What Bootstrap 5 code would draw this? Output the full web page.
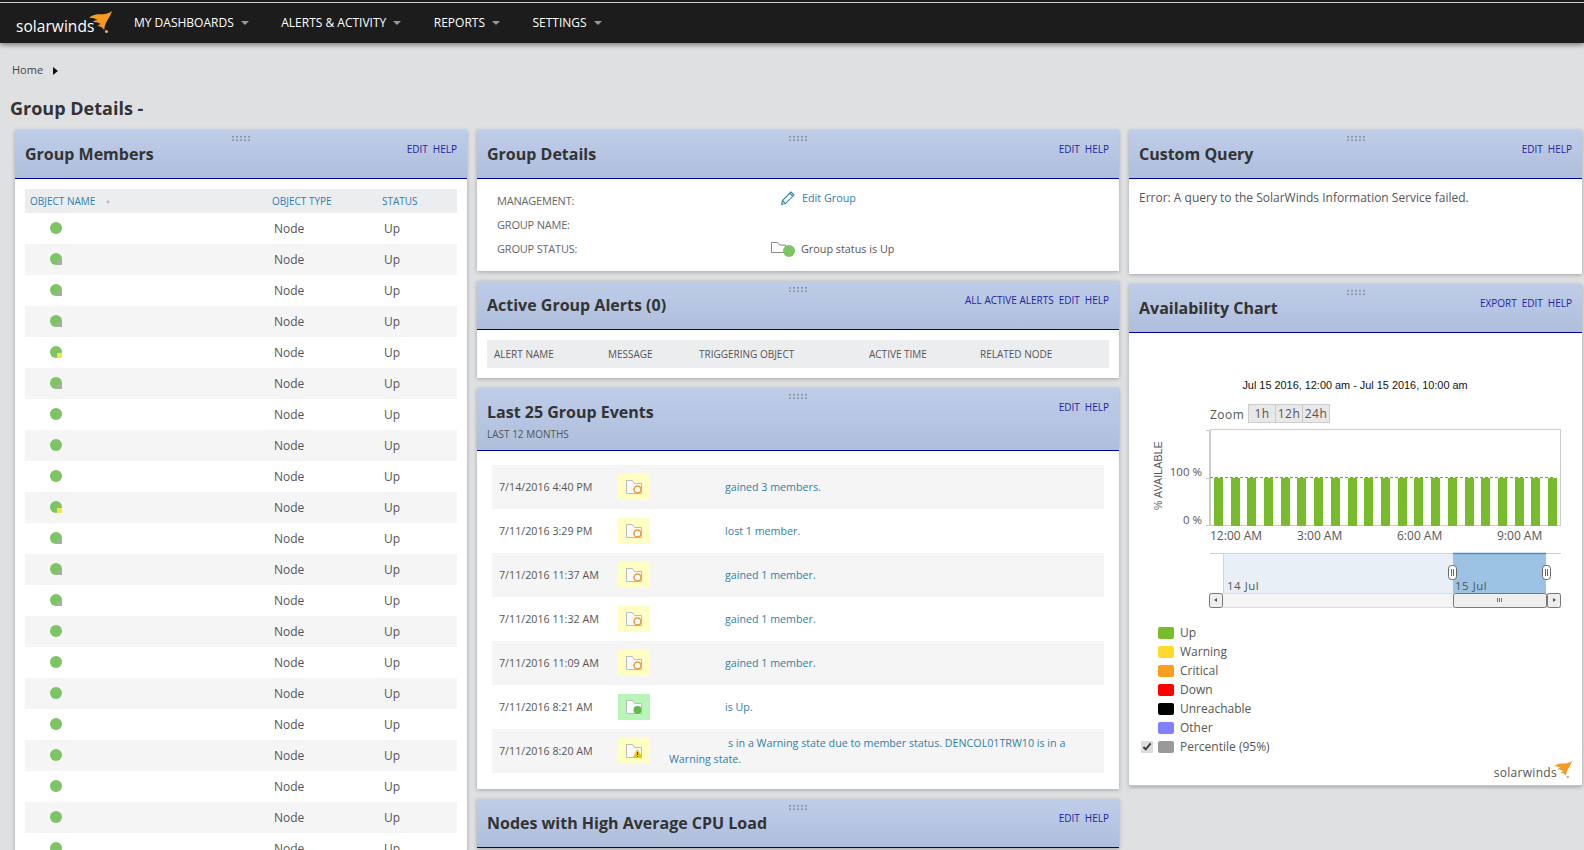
<!DOCTYPE html>
<html lang="en">
<head>
<meta charset="utf-8">
<title>Group Details</title>
<link href="https://cdn.jsdelivr.net/npm/bootstrap@5.3.0/dist/css/bootstrap.min.css" rel="stylesheet">
<style>
html,body{height:850px;overflow:hidden}
body{background:#dfe0e2;font-family:"Open Sans",sans-serif;font-size:12px;color:#555}
a{text-decoration:none}
.topbar{height:43px;background:#1c1c1c;border-top:2px solid #1c1c1c;box-shadow:0 2px 5px rgba(0,0,0,.45);position:relative}
.topbar::before{content:"";position:absolute;left:0;right:0;top:0;height:1px;background:#cfd0d0}
.brand{width:134px;height:41px;padding-left:16px}
.brand-word{font-size:15.5px;color:#fff;letter-spacing:.05px;line-height:1;margin-top:17px}
.flame-top{width:24px;height:23px;margin:9px 0 0 -5px}
.menu-item{color:#fff;font-size:12px;letter-spacing:0;margin-right:32.5px;line-height:1;margin-top:15px;height:14px}
.menu-item::after{content:"";display:inline-block;border:4px solid transparent;border-top:4px solid #999;border-bottom:0;margin-left:7px;vertical-align:2px}
.crumbs{height:53px;padding:19px 0 0 12px;font-size:11px;color:#444;line-height:15px}
.crumbs i{display:inline-block;border:4px solid transparent;border-left:5px solid #111;border-right:0;margin-left:7px;vertical-align:-1px}
.page-head{font-size:18px;font-weight:700;color:#333;padding-left:10px;line-height:24px;margin:0 0 10px}
.board{padding-left:15px;gap:10px}
.col-l{width:452px}.col-m{width:642px}.col-r{width:453px}
.stack{gap:10px}
.panel{background:#fff;box-shadow:0 1px 4px rgba(0,0,0,.28)}
.panel-top{position:relative;height:49px;padding:13px 10px 0;background:linear-gradient(#bfcde9,#aebedb);border-bottom:1px solid #00009a}
.panel-top.tall{height:63px}
.panel-title{font-size:16px;font-weight:700;color:#333;line-height:23px;margin:0}
.panel-sub{font-size:10px;color:#555;line-height:12px;margin-top:4px}
.panel-links{position:absolute;right:10px;top:13px;font-size:10px;line-height:13px;display:flex;gap:5px}
.panel-links a{color:#24249c}
.grip{position:absolute;top:5px;left:50%;margin-left:-10px;width:19px;height:7px;background-image:radial-gradient(circle,#8f96a6 1px,transparent 1.1px);background-size:4px 3.5px}
.grid-head{background:#ecedef;font-size:10px}
.members{padding:10px 10px 0}
.members .grid-head{height:24px;color:#2d7fb0;line-height:25px}
.m-row{height:31px;line-height:32px;font-size:12px}
.m-row:nth-child(even){background:#f5f5f5}
.c-name{width:247px;padding-left:5px}
.c-type{width:110px}
.m-row .c-type{padding-left:2px}
.m-row .c-stat{padding-left:2px}
.dot{display:block;position:relative;width:12px;height:12px;border-radius:50%;background:#7cc464;margin:9px 0 0 20px}
.dot.grey::after,.dot.yel::after{content:"";position:absolute;right:0;bottom:0;width:5px;height:5px;background:#aaa}
.dot.yel::after{background:#f5e642}
.sort-mark{font-size:6px;color:#bbb;margin-left:7px;vertical-align:2px}
.detail-body{height:92px;padding-top:10px;position:relative}
.d-row{height:24px;line-height:24px}
.d-label{width:281px;padding-left:20px;font-size:11px;color:#666;letter-spacing:-.2px}
.d-val{font-size:10.8px}
.edit-cell{margin-top:-3px;height:24px}
.edit-glyph{margin:0 6px 0 22px}
.status-glyph{margin:0 6px 0 13px}
.lnk{color:#2f7fa8}
.alert-body{padding:10px 10px 10px}
.alert-body .grid-head{height:28px;line-height:28px;color:#555}
.a1{width:121px;padding-left:7px}.a2{width:91px}.a3{width:170px}.a4{width:111px}
.events{padding:14px 15px 16px}
.e-row{height:44px;font-size:10.7px}
.e-row:nth-child(odd){background:#f5f5f5}
.e-date{width:126px;padding-left:7px;color:#555}
.e-icon{width:32px;height:26px;background:#ffffc4}
.e-icon.ok{background:#b9f5b9}
.e-msg{padding-left:75px}
.e-long{width:432px;padding-left:19px;line-height:16px}
.e-long span{padding-left:59px}
.query-body{height:95px;padding:11px 10px;font-size:12px;color:#555;line-height:16px}
.chart-area{display:block;width:453px;height:289px;margin-top:1px}
.chart-area text{font-family:"Open Sans",sans-serif}
.legend{padding:0 0 0 12px;height:163px;position:relative;border-bottom:1px solid #b8c6e4}
.leg-row{height:19px;line-height:19px;font-size:12px;color:#555}
.leg-check{width:12px;height:12px;margin-right:5px;accent-color:#ddd}
.swatch{display:block;width:16px;height:12px;border-radius:2px;margin:0 6px 0 17px}
.leg-row.has-check .swatch{margin-left:0}
.foot-logo{position:absolute;right:9px;top:138px}
.foot-word{font-size:12px;color:#555;letter-spacing:.3px;line-height:1;margin-top:6px}
.flame-small{width:19px;height:18px;margin-left:-3px}
</style>
</head>
<body>
<svg width="0" height="0" class="position-absolute">
  <symbol id="flame" viewBox="0 0 24 23">
    <path fill="#f79a22" d="M23 0C19 3 14 3.500 8.500 3.300 5 3.500 2 5 0 6.700 3 6.500 6 7.300 8.500 9 6.500 9 5 9.800 3.700 11 7 10.800 10 11.500 11.800 13 10.500 13.300 9.500 14 8.500 15 11 15 13.500 16.500 15.200 19 15.500 15 16.500 12 18.600 9 20 6.500 22 3.500 23 0Z"/>
    <circle cx="17.500" cy="20.500" r="1.600" fill="#f4a460"/>
  </symbol>
  <symbol id="folder" viewBox="0 0 16 14">
    <path d="M.5 13.500V.5h6l2 3h7v10z" fill="#fafafa" stroke="#bbb"/>
  </symbol>
</svg>

<nav class="topbar d-flex">
  <div class="brand d-flex">
    <span class="brand-word">solarwinds</span>
    <svg class="flame-top"><use href="#flame"/></svg>
  </div>
  <a class="menu-item" href="#">MY DASHBOARDS</a>
  <a class="menu-item" href="#">ALERTS &amp; ACTIVITY</a>
  <a class="menu-item" href="#">REPORTS</a>
  <a class="menu-item" href="#">SETTINGS</a>
</nav>

<div class="crumbs">Home <i></i></div>
<h1 class="page-head">Group Details -</h1>

<main class="board d-flex align-items-start">
  <div class="col-l">
    <section class="panel">
      <header class="panel-top"><span class="grip"></span><h2 class="panel-title">Group Members</h2><div class="panel-links"><a href="#">EDIT</a><a href="#">HELP</a></div></header>
      <div class="members">
        <div class="grid-head d-flex"><div class="c-name">OBJECT NAME <span class="sort-mark">▲</span></div><div class="c-type">OBJECT TYPE</div><div class="c-stat">STATUS</div></div>
        <div>
          <div class="m-row d-flex"><div class="c-name"><span class="dot"></span></div><div class="c-type">Node</div><div class="c-stat">Up</div></div>
          <div class="m-row d-flex"><div class="c-name"><span class="dot grey"></span></div><div class="c-type">Node</div><div class="c-stat">Up</div></div>
          <div class="m-row d-flex"><div class="c-name"><span class="dot grey"></span></div><div class="c-type">Node</div><div class="c-stat">Up</div></div>
          <div class="m-row d-flex"><div class="c-name"><span class="dot grey"></span></div><div class="c-type">Node</div><div class="c-stat">Up</div></div>
          <div class="m-row d-flex"><div class="c-name"><span class="dot yel"></span></div><div class="c-type">Node</div><div class="c-stat">Up</div></div>
          <div class="m-row d-flex"><div class="c-name"><span class="dot grey"></span></div><div class="c-type">Node</div><div class="c-stat">Up</div></div>
          <div class="m-row d-flex"><div class="c-name"><span class="dot"></span></div><div class="c-type">Node</div><div class="c-stat">Up</div></div>
          <div class="m-row d-flex"><div class="c-name"><span class="dot"></span></div><div class="c-type">Node</div><div class="c-stat">Up</div></div>
          <div class="m-row d-flex"><div class="c-name"><span class="dot"></span></div><div class="c-type">Node</div><div class="c-stat">Up</div></div>
          <div class="m-row d-flex"><div class="c-name"><span class="dot yel"></span></div><div class="c-type">Node</div><div class="c-stat">Up</div></div>
          <div class="m-row d-flex"><div class="c-name"><span class="dot grey"></span></div><div class="c-type">Node</div><div class="c-stat">Up</div></div>
          <div class="m-row d-flex"><div class="c-name"><span class="dot grey"></span></div><div class="c-type">Node</div><div class="c-stat">Up</div></div>
          <div class="m-row d-flex"><div class="c-name"><span class="dot grey"></span></div><div class="c-type">Node</div><div class="c-stat">Up</div></div>
          <div class="m-row d-flex"><div class="c-name"><span class="dot"></span></div><div class="c-type">Node</div><div class="c-stat">Up</div></div>
          <div class="m-row d-flex"><div class="c-name"><span class="dot"></span></div><div class="c-type">Node</div><div class="c-stat">Up</div></div>
          <div class="m-row d-flex"><div class="c-name"><span class="dot"></span></div><div class="c-type">Node</div><div class="c-stat">Up</div></div>
          <div class="m-row d-flex"><div class="c-name"><span class="dot"></span></div><div class="c-type">Node</div><div class="c-stat">Up</div></div>
          <div class="m-row d-flex"><div class="c-name"><span class="dot"></span></div><div class="c-type">Node</div><div class="c-stat">Up</div></div>
          <div class="m-row d-flex"><div class="c-name"><span class="dot"></span></div><div class="c-type">Node</div><div class="c-stat">Up</div></div>
          <div class="m-row d-flex"><div class="c-name"><span class="dot"></span></div><div class="c-type">Node</div><div class="c-stat">Up</div></div>
          <div class="m-row d-flex"><div class="c-name"><span class="dot"></span></div><div class="c-type">Node</div><div class="c-stat">Up</div></div>
        </div>
      </div>
    </section>
  </div>

  <div class="col-m d-flex flex-column stack">
    <section class="panel">
      <header class="panel-top"><span class="grip"></span><h2 class="panel-title">Group Details</h2><div class="panel-links"><a href="#">EDIT</a><a href="#">HELP</a></div></header>
      <div class="detail-body">
        <div class="d-row d-flex"><div class="d-label">MANAGEMENT:</div><div class="d-val d-flex align-items-center edit-cell">
          <svg width="16" height="16" viewBox="0 0 15 15" fill="none" stroke="#2f7fa8" class="edit-glyph"><path d="M1.500 13.500l.8-3.600 8-8 2.800 2.800-8 8zM9 3l3 3M2.300 9.900l2.800 2.800"/></svg>
          <a class="lnk" href="#">Edit Group</a></div></div>
        <div class="d-row d-flex"><div class="d-label">GROUP NAME:</div></div>
        <div class="d-row d-flex"><div class="d-label">GROUP STATUS:</div><div class="d-val d-flex align-items-center">
          <svg width="24" height="16" viewBox="0 0 24 16" class="status-glyph"><path d="M.5 11.500V1.500h6l2 2.500h6v7.500z" fill="#fff" stroke="#888"/><circle cx="18" cy="10" r="6" fill="#7cc464"/></svg>
          <span>Group status is Up</span></div></div>
      </div>
    </section>

    <section class="panel">
      <header class="panel-top"><span class="grip"></span><h2 class="panel-title">Active Group Alerts (0)</h2><div class="panel-links"><a href="#">ALL ACTIVE ALERTS</a><a href="#">EDIT</a><a href="#">HELP</a></div></header>
      <div class="alert-body">
        <div class="grid-head d-flex"><div class="a1">ALERT NAME</div><div class="a2">MESSAGE</div><div class="a3">TRIGGERING OBJECT</div><div class="a4">ACTIVE TIME</div><div>RELATED NODE</div></div>
      </div>
    </section>

    <section class="panel">
      <header class="panel-top tall"><span class="grip"></span><h2 class="panel-title">Last 25 Group Events</h2><div class="panel-sub">LAST 12 MONTHS</div><div class="panel-links"><a href="#">EDIT</a><a href="#">HELP</a></div></header>
      <div class="events">
        <div class="e-row d-flex align-items-center"><div class="e-date">7/14/2016 4:40 PM</div><div class="e-icon d-flex align-items-center justify-content-center"><svg width="16" height="14" viewBox="0 0 16 14"><use href="#folder"/><circle cx="11.500" cy="9.500" r="3.500" fill="#fff" stroke="#f39a3c" stroke-width="1.500"/></svg></div><a class="lnk e-msg" href="#">gained 3 members.</a></div>
        <div class="e-row d-flex align-items-center"><div class="e-date">7/11/2016 3:29 PM</div><div class="e-icon d-flex align-items-center justify-content-center"><svg width="16" height="14" viewBox="0 0 16 14"><use href="#folder"/><circle cx="11.500" cy="9.500" r="3.500" fill="#fff" stroke="#f39a3c" stroke-width="1.500"/></svg></div><a class="lnk e-msg" href="#">lost 1 member.</a></div>
        <div class="e-row d-flex align-items-center"><div class="e-date">7/11/2016 11:37 AM</div><div class="e-icon d-flex align-items-center justify-content-center"><svg width="16" height="14" viewBox="0 0 16 14"><use href="#folder"/><circle cx="11.500" cy="9.500" r="3.500" fill="#fff" stroke="#f39a3c" stroke-width="1.500"/></svg></div><a class="lnk e-msg" href="#">gained 1 member.</a></div>
        <div class="e-row d-flex align-items-center"><div class="e-date">7/11/2016 11:32 AM</div><div class="e-icon d-flex align-items-center justify-content-center"><svg width="16" height="14" viewBox="0 0 16 14"><use href="#folder"/><circle cx="11.500" cy="9.500" r="3.500" fill="#fff" stroke="#f39a3c" stroke-width="1.500"/></svg></div><a class="lnk e-msg" href="#">gained 1 member.</a></div>
        <div class="e-row d-flex align-items-center"><div class="e-date">7/11/2016 11:09 AM</div><div class="e-icon d-flex align-items-center justify-content-center"><svg width="16" height="14" viewBox="0 0 16 14"><use href="#folder"/><circle cx="11.500" cy="9.500" r="3.500" fill="#fff" stroke="#f39a3c" stroke-width="1.500"/></svg></div><a class="lnk e-msg" href="#">gained 1 member.</a></div>
        <div class="e-row d-flex align-items-center"><div class="e-date">7/11/2016 8:21 AM</div><div class="e-icon ok d-flex align-items-center justify-content-center"><svg width="16" height="14" viewBox="0 0 16 14"><use href="#folder"/><circle cx="11.500" cy="10" r="4" fill="#62b84e"/></svg></div><a class="lnk e-msg" href="#">is Up.</a></div>
        <div class="e-row d-flex align-items-center"><div class="e-date">7/11/2016 8:20 AM</div><div class="e-icon d-flex align-items-center justify-content-center"><svg width="16" height="14" viewBox="0 0 16 14"><use href="#folder"/><path d="M11.500 5l5 9h-10z" fill="#f5c400"/><path d="M11.500 8v3M11.500 12v1" stroke="#333"/></svg></div><a class="lnk e-long" href="#"><span>s in a Warning state due to member status. DENCOL01TRW10 is in a</span><br>Warning state.</a></div>
      </div>
    </section>

    <section class="panel">
      <header class="panel-top"><span class="grip"></span><h2 class="panel-title">Nodes with High Average CPU Load</h2><div class="panel-links"><a href="#">EDIT</a><a href="#">HELP</a></div></header>
    </section>
  </div>

  <div class="col-r d-flex flex-column stack">
    <section class="panel">
      <header class="panel-top"><span class="grip"></span><h2 class="panel-title">Custom Query</h2><div class="panel-links"><a href="#">EDIT</a><a href="#">HELP</a></div></header>
      <div class="query-body">Error: A query to the SolarWinds Information Service failed.</div>
    </section>
    <section class="panel">
      <header class="panel-top"><span class="grip"></span><h2 class="panel-title">Availability Chart</h2><div class="panel-links"><a href="#">EXPORT</a><a href="#">EDIT</a><a href="#">HELP</a></div></header>
      <svg class="chart-area" viewBox="1129 334 453 289">
        <text x="1355" y="389" text-anchor="middle" style="font-family:'Liberation Sans',sans-serif" font-size="10.9" fill="#111">Jul 15 2016, 12:00 am - Jul 15 2016, 10:00 am</text>
        <text x="1210" y="419" font-size="12" fill="#555" letter-spacing=".5">Zoom</text>
        <g fill="#e8e8e8" stroke="#ccc"><rect x="1248.500" y="404.500" width="27" height="18"/><rect x="1275.500" y="404.500" width="27" height="18"/><rect x="1302.500" y="404.500" width="27" height="18"/></g>
        <g font-size="12" fill="#555" text-anchor="middle" letter-spacing=".5"><text x="1262" y="418">1h</text><text x="1289" y="418">12h</text><text x="1316" y="418">24h</text></g>
        <rect x="1210.500" y="429.500" width="350" height="96" fill="#fff" stroke="#ccc"/>
        <path d="M1206 430.500h4M1206 478.500h4M1206 525.500h4" stroke="#ccc"/>
        <path d="M1210 430v96" stroke="#ccc" stroke-width="2"/>
        <g fill="#78bc2c">
          <rect x="1214" y="478" width="9" height="48"/><rect x="1231" y="478" width="9" height="48"/><rect x="1247" y="478" width="9" height="48"/><rect x="1264" y="478" width="9" height="48"/><rect x="1281" y="478" width="9" height="48"/><rect x="1297" y="478" width="9" height="48"/><rect x="1314" y="478" width="9" height="48"/><rect x="1331" y="478" width="9" height="48"/><rect x="1348" y="478" width="9" height="48"/><rect x="1364" y="478" width="9" height="48"/><rect x="1381" y="478" width="9" height="48"/><rect x="1398" y="478" width="9" height="48"/><rect x="1414" y="478" width="9" height="48"/><rect x="1431" y="478" width="9" height="48"/><rect x="1448" y="478" width="9" height="48"/><rect x="1465" y="478" width="9" height="48"/><rect x="1481" y="478" width="9" height="48"/><rect x="1498" y="478" width="9" height="48"/><rect x="1515" y="478" width="9" height="48"/><rect x="1531" y="478" width="9" height="48"/><rect x="1548" y="478" width="9" height="48"/>
        </g>
        <path d="M1210 477.500h345" stroke="#8c8c8c" stroke-dasharray="3 2"/>
        <g font-size="11.500" fill="#555" text-anchor="end"><text x="1202" y="476">100 %</text><text x="1202" y="524">0 %</text></g>
        <text transform="translate(1162 510) rotate(-90)" font-size="10.500" letter-spacing=".2" fill="#555" style="font-family:'Liberation Sans',sans-serif">% AVAILABLE</text>
        <g font-size="12" fill="#555"><text x="1210" y="540">12:00 AM</text><text x="1297" y="540">3:00 AM</text><text x="1397" y="540">6:00 AM</text><text x="1497" y="540">9:00 AM</text></g>
        <path d="M1210 553.500h351" stroke="#ccc"/>
        <rect x="1223.500" y="553.500" width="230" height="40" fill="#e9eff7" stroke="#cdd5e0"/>
        <rect x="1453" y="553" width="93" height="41" fill="#9cc3e4"/>
        <path d="M1453 553.500h93" stroke="#4a8fc9" stroke-width="1.500"/>
        <g font-size="11.500" fill="#555" letter-spacing=".5"><text x="1227" y="590">14 Jul</text><text x="1455" y="590">15 Jul</text></g>
        <g fill="#fff" stroke="#666"><rect x="1448.500" y="565.500" width="8" height="14" rx="3"/><rect x="1542.500" y="565.500" width="8" height="14" rx="3"/></g>
        <path d="M1451.500 569v7M1453.500 569v7M1545.500 569v7M1547.500 569v7" stroke="#666"/>
        <rect x="1210.500" y="593.500" width="350" height="14" fill="#f4f4f4" stroke="#ddd"/>
        <g fill="#eee" stroke="#777"><rect x="1209.500" y="593.500" width="13" height="14" rx="2"/><rect x="1453.500" y="593.500" width="93" height="14" rx="2"/><rect x="1547.500" y="593.500" width="13" height="14" rx="2"/></g>
        <path d="M1217 598v4l-3-2zM1553 598v4l3-2z" fill="#555"/>
        <path d="M1497.500 598v4M1499.500 598v4M1501.500 598v4" stroke="#777"/>
      </svg>
      <div class="legend">
        <div class="leg-row d-flex align-items-center"><span class="swatch" style="background:#78bc2c"></span>Up</div>
        <div class="leg-row d-flex align-items-center"><span class="swatch" style="background:#ffd92b"></span>Warning</div>
        <div class="leg-row d-flex align-items-center"><span class="swatch" style="background:#fb9d1e"></span>Critical</div>
        <div class="leg-row d-flex align-items-center"><span class="swatch" style="background:#ff0000"></span>Down</div>
        <div class="leg-row d-flex align-items-center"><span class="swatch" style="background:#000000"></span>Unreachable</div>
        <div class="leg-row d-flex align-items-center"><span class="swatch" style="background:#8080ff"></span>Other</div>
        <div class="leg-row has-check d-flex align-items-center"><input class="leg-check" type="checkbox" checked aria-label="Percentile"><span class="swatch" style="background:#999999"></span>Percentile (95%)</div>
        <div class="foot-logo d-flex"><span class="foot-word">solarwinds</span><svg class="flame-small"><use href="#flame"/></svg></div>
      </div>
    </section>
  </div>
</main>
</body>
</html>
